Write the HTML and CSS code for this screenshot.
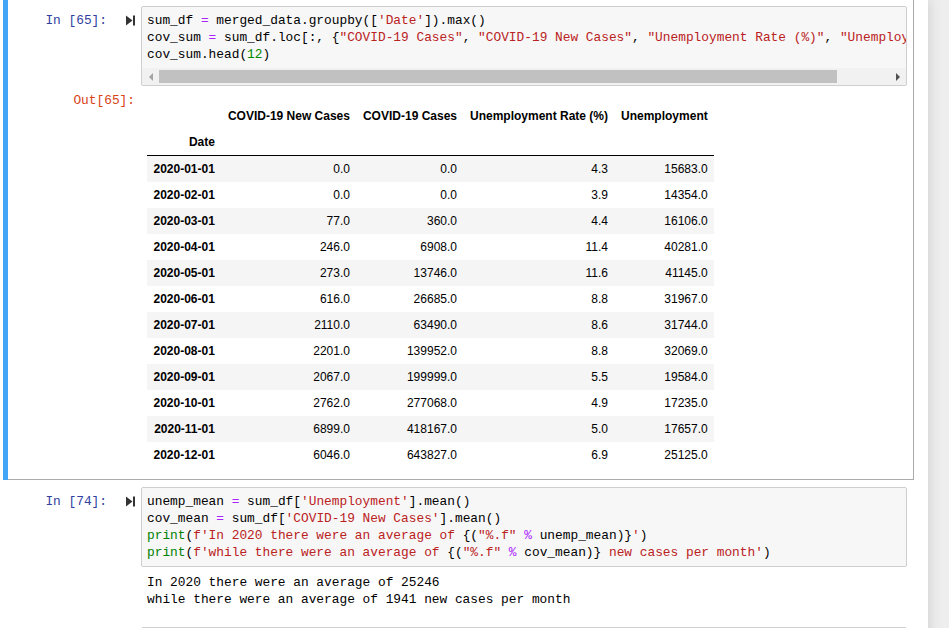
FILE: index.html
```html
<!DOCTYPE html>
<html>
<head>
<meta charset="utf-8">
<title>Notebook</title>
<link rel="stylesheet" href="styles.css">
</head>
<body>
<div class="notebook">
  <div class="cell selected">
    <div class="input-row">
      <div class="prompt in-prompt"><span>In&nbsp;[65]:</span><svg class="run-icon" viewBox="0 0 9 11" width="9" height="11"><polygon points="0,0.5 6.5,5.5 0,10.5" fill="#333"/><rect x="7" y="0.5" width="2" height="10" fill="#333"/></svg></div>
      <div class="input-area">
        <div class="code">
          <div class="line">sum_df <span class="o">=</span> merged_data.groupby([<span class="s">'Date'</span>]).max()</div>
          <div class="line">cov_sum <span class="o">=</span> sum_df.loc[:, {<span class="s">"COVID-19 Cases"</span>, <span class="s">"COVID-19 New Cases"</span>, <span class="s">"Unemployment Rate (%)"</span>, <span class="s">"Unemployment"</span>}]</div>
          <div class="line">cov_sum.head(<span class="n">12</span>)</div>
        </div>
        <div class="hscroll">
          <div class="sb-btn"><span class="arrow-left"></span></div>
          <div class="sb-thumb"></div>
          <div class="sb-rest"></div>
          <div class="sb-btn"><span class="arrow-right"></span></div>
        </div>
      </div>
    </div>
    <div class="output-row">
      <div class="prompt out-prompt">Out[65]:</div>
      <div class="output-sub">
        <table class="dataframe">
          <thead>
            <tr><th></th><th>COVID-19 New Cases</th><th>COVID-19 Cases</th><th>Unemployment Rate (%)</th><th>Unemployment</th></tr>
            <tr><th>Date</th><th></th><th></th><th></th><th></th></tr>
          </thead>
          <tbody>
            <tr><th>2020-01-01</th><td>0.0</td><td>0.0</td><td>4.3</td><td>15683.0</td></tr>
            <tr><th>2020-02-01</th><td>0.0</td><td>0.0</td><td>3.9</td><td>14354.0</td></tr>
            <tr><th>2020-03-01</th><td>77.0</td><td>360.0</td><td>4.4</td><td>16106.0</td></tr>
            <tr><th>2020-04-01</th><td>246.0</td><td>6908.0</td><td>11.4</td><td>40281.0</td></tr>
            <tr><th>2020-05-01</th><td>273.0</td><td>13746.0</td><td>11.6</td><td>41145.0</td></tr>
            <tr><th>2020-06-01</th><td>616.0</td><td>26685.0</td><td>8.8</td><td>31967.0</td></tr>
            <tr><th>2020-07-01</th><td>2110.0</td><td>63490.0</td><td>8.6</td><td>31744.0</td></tr>
            <tr><th>2020-08-01</th><td>2201.0</td><td>139952.0</td><td>8.8</td><td>32069.0</td></tr>
            <tr><th>2020-09-01</th><td>2067.0</td><td>199999.0</td><td>5.5</td><td>19584.0</td></tr>
            <tr><th>2020-10-01</th><td>2762.0</td><td>277068.0</td><td>4.9</td><td>17235.0</td></tr>
            <tr><th>2020-11-01</th><td>6899.0</td><td>418167.0</td><td>5.0</td><td>17657.0</td></tr>
            <tr><th>2020-12-01</th><td>6046.0</td><td>643827.0</td><td>6.9</td><td>25125.0</td></tr>
          </tbody>
        </table>
      </div>
    </div>
  </div>

  <div class="cell">
    <div class="input-row">
      <div class="prompt in-prompt"><span>In&nbsp;[74]:</span><svg class="run-icon" viewBox="0 0 9 11" width="9" height="11"><polygon points="0,0.5 6.5,5.5 0,10.5" fill="#333"/><rect x="7" y="0.5" width="2" height="10" fill="#333"/></svg></div>
      <div class="input-area">
        <div class="code code-plain">
          <div class="line">unemp_mean <span class="o">=</span> sum_df[<span class="s">'Unemployment'</span>].mean()</div>
          <div class="line">cov_mean <span class="o">=</span> sum_df[<span class="s">'COVID-19 New Cases'</span>].mean()</div>
          <div class="line"><span class="b">print</span>(<span class="s">f'In 2020 there were an average of </span>{(<span class="s">"%.f"</span> <span class="o">%</span> unemp_mean)}<span class="s">'</span>)</div>
          <div class="line"><span class="b">print</span>(<span class="s">f'while there were an average of </span>{(<span class="s">"%.f"</span> <span class="o">%</span> cov_mean)}<span class="s"> new cases per month'</span>)</div>
        </div>
      </div>
    </div>
    <div class="output-row">
      <div class="prompt out-prompt blank"></div>
      <div class="output-sub">
        <div class="stream">
          <div class="line">In 2020 there were an average of 25246</div>
          <div class="line">while there were an average of 1941 new cases per month</div>
        </div>
      </div>
    </div>
  </div>

  <div class="cell">
    <div class="input-row">
      <div class="prompt in-prompt"></div>
      <div class="input-area tall"></div>
    </div>
  </div>
</div>
</body>
</html>
```
FILE: styles.css
```css
html, body {
  margin: 0;
  padding: 0;
  background: #eeeeee;
  overflow: hidden;
  height: 100%;
}

.notebook {
  width: 928px;
  min-height: 100%;
  background: #ffffff;
  box-shadow: 0 0 12px 1px rgba(87, 87, 87, 0.2);
  box-sizing: border-box;
  padding-left: 3px;
}

.cell {
  position: relative;
  width: 911px;
  box-sizing: border-box;
  border: 1px solid transparent;
  padding: 6px 6px 5px 5px;
}

.cell.selected {
  border-color: #ababab;
  border-top: none;
}

.cell.selected::before {
  content: "";
  position: absolute;
  left: -1px;
  top: 0;
  bottom: -1px;
  width: 5px;
  background: #42a5f5;
}

.input-row,
.output-row {
  display: flex;
  align-items: flex-start;
}

.prompt {
  flex: 0 0 132px;
  width: 132px;
  box-sizing: border-box;
  font-family: "Liberation Mono", monospace;
  font-size: 12.83px;
  line-height: 17px;
}

.in-prompt {
  display: flex;
  justify-content: flex-end;
  align-items: center;
  height: 17px;
  margin-top: 6px;
  color: #303f9f;
}

.run-icon {
  display: block;
  margin-left: 19px;
  margin-right: 6px;
}

.out-prompt {
  padding-top: 6px;
  padding-right: 6px;
  text-align: right;
  color: #d84315;
}

.input-area {
  flex: 1;
  min-width: 0;
  background: #f7f7f7;
  border: 1px solid #cfcfcf;
  border-radius: 2px;
  overflow: hidden;
}

.input-area.tall {
  height: 60px;
}

.code {
  padding: 5px 0 0 5px;
  font-family: "Liberation Mono", monospace;
  font-size: 12.83px;
  line-height: 17px;
  color: #000;
}

.line {
  height: 17px;
  white-space: pre;
}

.code-plain {
  padding-bottom: 5px;
}

.o { color: #aa22ff; }
.s { color: #ba2121; }
.n { color: #008800; }
.b { color: #008000; }

.hscroll {
  display: flex;
  height: 17px;
  margin-top: 5px;
  background: #f1f1f1;
}

.sb-btn {
  flex: 0 0 17px;
  display: flex;
  align-items: center;
  justify-content: center;
}

.sb-thumb {
  flex: 0 0 678px;
  margin: 2px 0;
  background: #c1c1c1;
}

.sb-rest {
  flex: 1;
}

.arrow-left {
  width: 0;
  height: 0;
  border-top: 4px solid transparent;
  border-bottom: 4px solid transparent;
  border-right: 4px solid #a3a3a3;
}

.arrow-right {
  width: 0;
  height: 0;
  border-top: 4px solid transparent;
  border-bottom: 4px solid transparent;
  border-left: 4px solid #505050;
}

.output-sub {
  flex: 1;
  min-width: 0;
  padding: 6px;
}

.dataframe {
  margin-top: 11px;
  border-collapse: collapse;
  border-spacing: 0;
  font-family: "Liberation Sans", Arial, sans-serif;
  font-size: 12px;
  color: #000;
}

.dataframe th,
.dataframe td {
  padding: 6px 6.5px;
  line-height: 14px;
  text-align: right;
  vertical-align: middle;
  white-space: nowrap;
}

.dataframe th {
  font-weight: bold;
}

.dataframe td {
  font-weight: normal;
}

.dataframe thead {
  border-bottom: 1px solid #000;
}

.dataframe tbody tr:nth-child(odd) {
  background: #f5f5f5;
}

.stream {
  padding-top: 1px;
  font-family: "Liberation Mono", monospace;
  font-size: 12.83px;
  line-height: 17px;
  color: #000;
}
```
